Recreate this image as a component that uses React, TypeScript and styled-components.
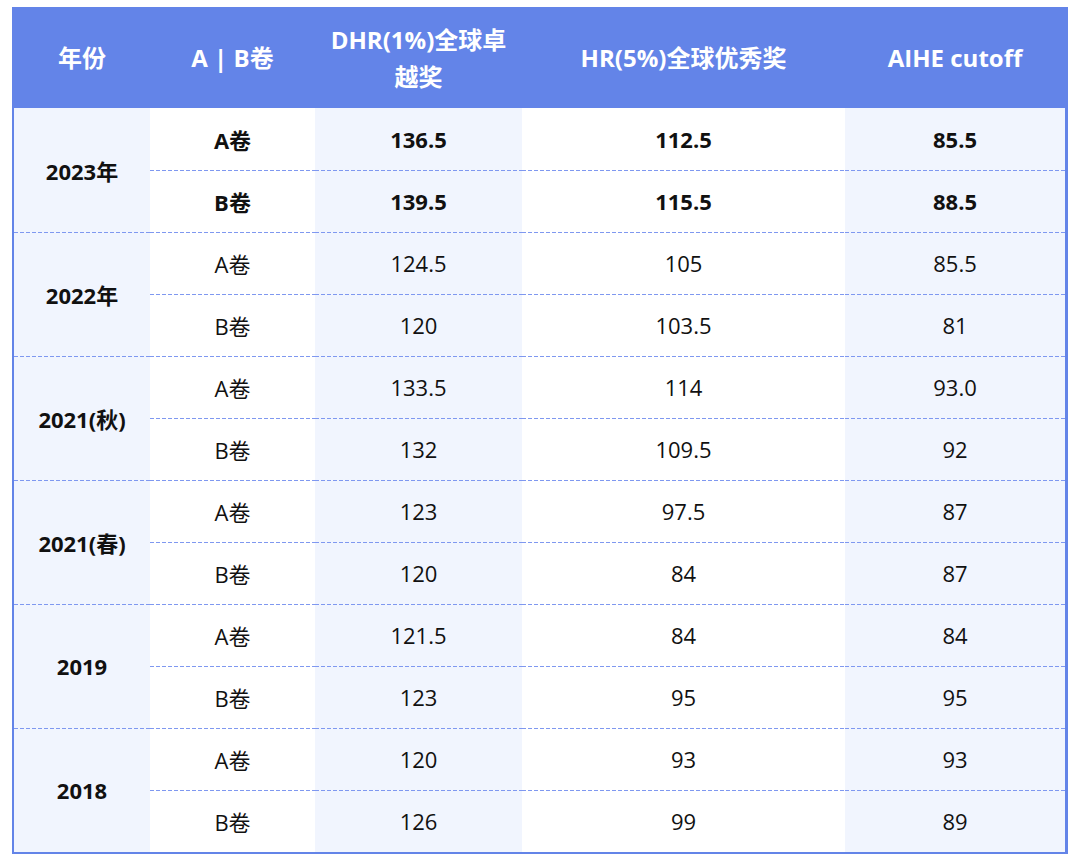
import React from 'react';
import styled, { createGlobalStyle } from 'styled-components';

const GlobalStyle = createGlobalStyle`
  html, body {
    margin: 0;
    padding: 0;
    background: #ffffff;
  }
  body {
    font-family: 'Open Sans', 'Noto Sans CJK SC', sans-serif;
  }
`;

const Page = styled.div`
  width: 1080px;
  height: 863px;
  padding: 7px 0 0 12px;
  box-sizing: border-box;
`;

const Table = styled.table`
  width: 1056px;
  border-collapse: separate;
  border-spacing: 0;
  table-layout: fixed;
  border-left: 2px solid #6384e8;
  border-right: 3px solid #6384e8;
  border-bottom: 2px solid #6384e8;
`;

const HeadCell = styled.th`
  height: 101px;
  padding: 0 10px;
  background: #6384e8;
  color: #ffffff;
  font-size: 24px;
  font-weight: 700;
  line-height: 37px;
  text-align: center;
  vertical-align: middle;
`;

// dashed separator line drawn on top of the cell background
const dash = 'linear-gradient(to right, #7f98f0 4px, transparent 4px) top left / 6px 1px repeat-x';

const Cell = styled.td<{ $shade?: boolean; $bold?: boolean; $split?: boolean }>`
  height: 62px;
  padding: 0;
  box-sizing: border-box;
  text-align: center;
  vertical-align: middle;
  font-size: 22px;
  color: #111111;
  font-weight: ${p => (p.$bold ? 700 : 400)};
  background: ${p => (p.$split ? dash + ', ' : '')}${p => (p.$shade ? '#f1f5fe' : '#ffffff')};
`;

type Row = { year: string; a: string[]; b: string[]; bold?: boolean };

const rows: Row[] = [
  { year: '2023年', a: ['136.5', '112.5', '85.5'], b: ['139.5', '115.5', '88.5'], bold: true },
  { year: '2022年', a: ['124.5', '105', '85.5'], b: ['120', '103.5', '81'] },
  { year: '2021(秋)', a: ['133.5', '114', '93.0'], b: ['132', '109.5', '92'] },
  { year: '2021(春)', a: ['123', '97.5', '87'], b: ['120', '84', '87'] },
  { year: '2019', a: ['121.5', '84', '84'], b: ['123', '95', '95'] },
  { year: '2018', a: ['120', '93', '93'], b: ['126', '99', '89'] },
];

const shades = [true, false, true];

export default function App() {
  return (
    <Page>
      <GlobalStyle />
      <Table>
        <colgroup>
          <col style={{ width: 136 }} />
          <col style={{ width: 165 }} />
          <col style={{ width: 207 }} />
          <col style={{ width: 323 }} />
          <col />
        </colgroup>
        <thead>
          <tr>
            <HeadCell>年份</HeadCell>
            <HeadCell>A | B卷</HeadCell>
            <HeadCell>
              DHR(1%)全球卓
              <br />
              越奖
            </HeadCell>
            <HeadCell>HR(5%)全球优秀奖</HeadCell>
            <HeadCell>AIHE cutoff</HeadCell>
          </tr>
        </thead>
        <tbody>
          {rows.map((r, i) => (
            <React.Fragment key={r.year}>
              <tr>
                <Cell rowSpan={2} $shade $bold $split={i > 0}>
                  {r.year}
                </Cell>
                <Cell $bold={r.bold} $split={i > 0}>
                  A卷
                </Cell>
                {r.a.map((v, j) => (
                  <Cell key={j} $shade={shades[j]} $bold={r.bold} $split={i > 0}>
                    {v}
                  </Cell>
                ))}
              </tr>
              <tr>
                <Cell $bold={r.bold} $split>
                  B卷
                </Cell>
                {r.b.map((v, j) => (
                  <Cell key={j} $shade={shades[j]} $bold={r.bold} $split>
                    {v}
                  </Cell>
                ))}
              </tr>
            </React.Fragment>
          ))}
        </tbody>
      </Table>
    </Page>
  );
}
